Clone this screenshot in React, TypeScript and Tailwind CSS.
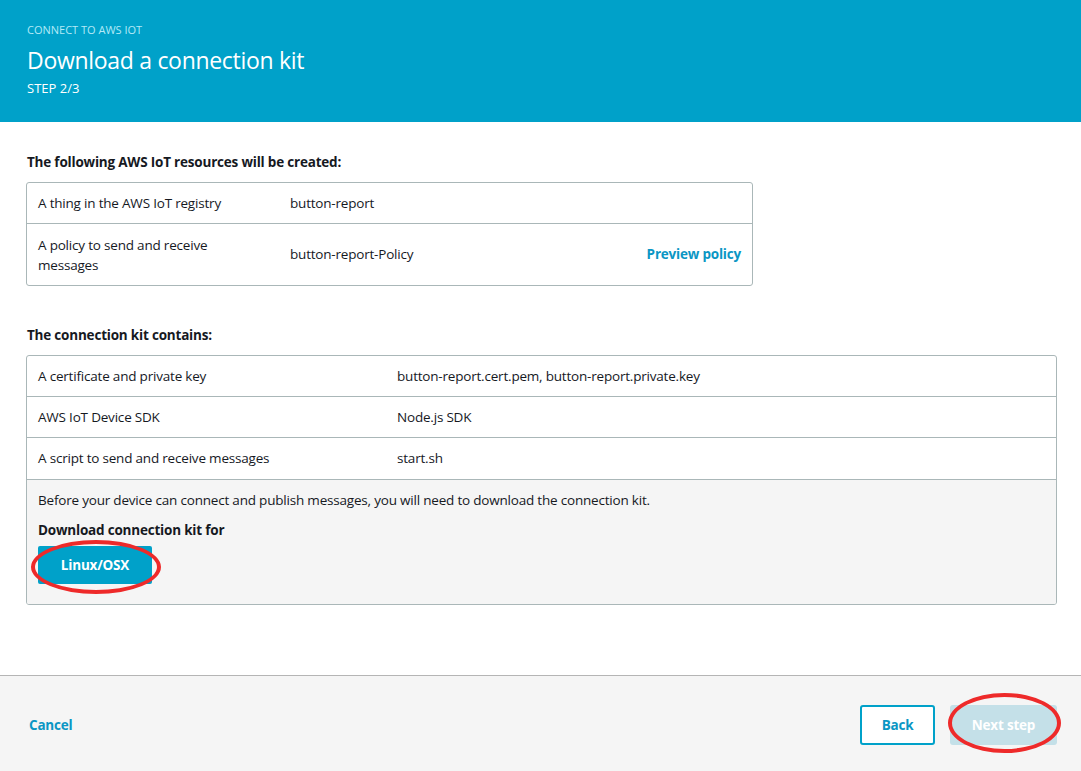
import React from "react";

const font = { fontFamily: '"Open Sans", "Noto Sans", Arial, sans-serif' };

function Row({ left, right, extra, tall, col }: { left: React.ReactNode; right: string; extra?: React.ReactNode; tall?: boolean; col: string }) {
  return (
    <div className={`flex items-center border-b border-[#aab7b8] last:border-b-0 px-[11px] ${tall ? "h-[61px]" : "h-[41px]"}`}>
      <div className={`${col} shrink-0 leading-[20px]`}>{left}</div>
      <div className="flex-1">{right}</div>
      {extra}
    </div>
  );
}

export default function App() {
  return (
    <div className="w-[1081px] h-[771px] flex flex-col bg-white text-[13.5px] tracking-[-0.2px] text-[#16191f] relative overflow-hidden" style={font}>
      <div className="h-[122px] bg-[#00a1c9] px-[27px] pt-[22px] shrink-0 tracking-normal">
        <div className="text-[11px] text-[#b3e9f7] leading-[16px]">CONNECT TO AWS IOT</div>
        <div className="text-[23px] text-white leading-[30px] mt-[7px] tracking-[-0.3px]">Download a connection kit</div>
        <div className="text-[13px] text-white leading-[16px] mt-[5px]">STEP 2/3</div>
      </div>

      <div className="flex-1 px-[26px] pt-[30px]">
        <div className="font-bold leading-[20px] pl-[1px]">The following AWS IoT resources will be created:</div>
        <div className="mt-[10px] w-[727px] border border-[#aab7b8] rounded-[3px]">
          <Row col="w-[252px]" left="A thing in the AWS IoT registry" right="button-report" />
          <Row
            col="w-[252px]"
            tall
            left={<>A policy to send and receive<br />messages</>}
            right="button-report-Policy"
            extra={<span className="font-bold text-[#0a96c4]">Preview policy</span>}
          />
        </div>

        <div className="font-bold leading-[20px] pl-[1px] mt-[39px]">The connection kit contains:</div>
        <div className="mt-[10px] w-[1031px] border border-[#aab7b8] rounded-[3px] overflow-hidden">
          <Row col="w-[359px]" left="A certificate and private key" right="button-report.cert.pem, button-report.private.key" />
          <Row col="w-[359px]" left="AWS IoT Device SDK" right="Node.js SDK" />
          <div className="border-b border-[#aab7b8]">
            <div className="flex items-center h-[41px] px-[11px]">
              <div className="w-[359px] shrink-0">A script to send and receive messages</div>
              <div className="flex-1">start.sh</div>
            </div>
          </div>
          <div className="bg-[#f5f5f5] h-[124px] px-[11px] pt-[10px]">
            <div className="leading-[20px]">Before your device can connect and publish messages, you will need to download the connection kit.</div>
            <div className="font-bold leading-[20px] mt-[10px]">Download connection kit for</div>
            <button className="mt-[6px] w-[114px] h-[38px] bg-[#00a1c9] rounded-[2px] text-white font-bold text-[13.5px]">Linux/OSX</button>
          </div>
        </div>
      </div>

      <div className="h-[96px] shrink-0 bg-[#f5f5f5] border-t border-[#b5b5b5] flex items-center px-[29px] pt-[3px]">
        <span className="font-bold text-[#0a96c4]">Cancel</span>
        <div className="flex-1" />
        <button className="w-[75px] h-[40px] border-2 border-[#00a1c9] rounded-[3px] bg-white text-[#0a96c4] font-bold mr-[15px]">Back</button>
        <button className="w-[107px] h-[40px] bg-[#c4e0e8] rounded-[3px] text-white font-bold -mr-[5px]">Next step</button>
      </div>

      <div className="absolute left-[31px] top-[540px] w-[130px] h-[54px] rounded-[50%] border-[4px] border-[#ee2a2a] pointer-events-none" />
      <div className="absolute left-[948px] top-[693px] w-[113px] h-[60px] rounded-[50%] border-[4px] border-[#ee2a2a] pointer-events-none" />
    </div>
  );
}
